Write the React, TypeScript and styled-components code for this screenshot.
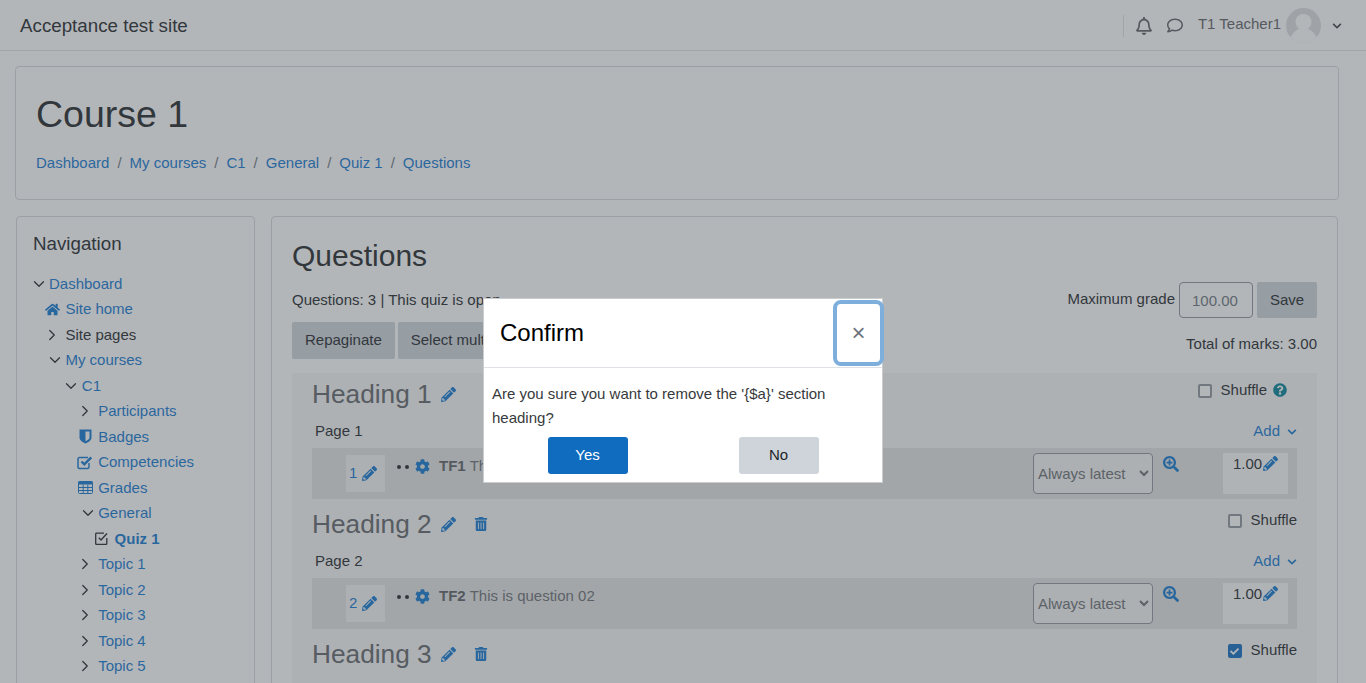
import styled, { createGlobalStyle } from "styled-components";
import {
  FaCheck,
  FaChevronDown,
  FaCog,
  FaHome,
  FaPencilAlt,
  FaQuestionCircle,
  FaRegBell,
  FaRegComment,
  FaSearchPlus,
  FaTrashAlt,
} from "react-icons/fa";
import { ChevronDown, ChevronRight } from "lucide-react";
import type { ReactNode } from "react";

const GlobalStyle = createGlobalStyle`
  html, body {
    margin: 0;
    height: 683px;
    overflow: hidden;
    background: #fff;
  }
  body {
    font-family: "Liberation Sans", Arial, sans-serif;
    font-size: 15px;
    line-height: 22.5px;
    color: #212529;
  }
  * { box-sizing: border-box; }
`;

const Page = styled.div`
  height: 683px;
  overflow: hidden;
`;

const Navbar = styled.header`
  height: 51px;
  display: flex;
  align-items: center;
  padding: 0 20px;
  background: #fff;
  border-bottom: 1px solid #dee2e6;
`;

const SiteName = styled.div`
  font-size: 18.75px;
  flex: 1;
  padding-top: 2px;
`;

const UserMenu = styled.div`
  display: flex;
  align-items: center;
  margin-top: 1px;
  color: #5d6166;
`;

const Divider = styled.div`
  width: 1px;
  height: 22px;
  background: #dee2e6;
  margin-right: 12px;
`;

const NavIcon = styled.span<{ $size: number }>`
  display: inline-flex;
  width: 16px;
  justify-content: center;
  font-size: ${(p) => p.$size}px;
  margin-right: 15px;
`;

const UserName = styled.span`
  margin-right: 5px;
  position: relative;
  top: -1px;
`;

const Caret = styled.span`
  display: inline-flex;
  margin-left: 11px;
  margin-right: 4px;
  font-size: 10px;
  color: #3a3f44;
`;

const PageHeader = styled.section`
  margin: 15px 27px 16px 15px;
  height: 134px;
  padding: 20px;
  background: #fff;
  border: 1px solid #d5d9dd;
  border-radius: 4px;
`;

const Title = styled.h1`
  margin: 0;
  font-size: 37.5px;
  line-height: 54px;
  font-weight: 400;
`;

const Crumbs = styled.nav`
  display: flex;
  gap: 8px;
  margin-top: 11px;
  color: #6c757d;
`;

const CrumbSep = styled.span`
  margin-right: 8px;
`;

const Link = styled.a`
  color: #1177d1;
`;

const Columns = styled.div`
  display: flex;
  gap: 16px;
  padding: 0 28px 0 16px;
`;

const NavBlock = styled.aside`
  width: 239px;
  flex: none;
  height: 520px;
  padding: 16px;
  border: 1px solid #d5d9dd;
  border-radius: 4px;
  background: #fff;
`;

const BlockTitle = styled.h5`
  margin: 0 0 16px;
  font-size: 18.75px;
  line-height: 22px;
  font-weight: 400;
`;

const TreeRow = styled.div<{ $level: number; $plain?: boolean }>`
  height: 25.5px;
  display: flex;
  align-items: center;
  padding-left: ${(p) => p.$level * 16.4}px;
  color: ${(p) => (p.$plain ? "#212529" : "#1177d1")};
`;

const TreeIcon = styled.span<{ $muted?: boolean }>`
  width: 16px;
  margin: 0 5px 0 -5px;
  flex: none;
  display: inline-flex;
  justify-content: center;
  font-size: 15px;
  color: ${(p) => (p.$muted ? "#212529" : "#1177d1")};
  svg { flex: none; }
`;

const TreeDown = styled(ChevronDown)`
  margin-left: 5px;
`;

const TreeLabel = styled.span<{ $bold?: boolean }>`
  font-weight: ${(p) => (p.$bold ? 700 : 400)};
`;

const Main = styled.main`
  flex: 1;
  height: 520px;
  padding: 21px 20px 20px;
  background: #fff;
  border: 1px solid #d5d9dd;
  border-radius: 4px;
`;

const MainTitle = styled.h2`
  margin: 0 0 8px;
  font-size: 30px;
  line-height: 36px;
  font-weight: 400;
`;

const ToolRow = styled.div`
  display: flex;
  justify-content: space-between;
  align-items: flex-end;
  margin-top: 4px;
`;

const QuizInfo = styled.div`
  height: 36px;
  padding-top: 7px;
`;

const GradeForm = styled.div`
  display: flex;
  align-items: flex-start;
  gap: 4px;
`;

const GradeLabel = styled.span`
  padding-top: 6px;
`;

const GradeInput = styled.input`
  width: 74px;
  height: 36px;
  padding: 0 12px;
  font: inherit;
  color: #6c757d;
  background: #fff;
  border: 1px solid #8f959e;
  border-radius: 4px;
`;

const PlainButton = styled.button`
  height: 37px;
  padding: 0 13px;
  font: inherit;
  color: #212529;
  background: #ced4da;
  border: 0;
  border-radius: 2px;
  white-space: nowrap;
`;

const SaveButton = styled(PlainButton)`
  height: 36px;
  width: 60px;
  padding: 0;
`;

const ButtonGroup = styled.div`
  display: flex;
  gap: 3px;
`;

const Marks = styled.div`
  padding-bottom: 4px;
`;

const SectionList = styled.div`
  margin-top: 14px;
  padding: 1px 20px 0;
  background: #f7f7f7;
`;

const Section = styled.section`
  height: 130px;
`;

const SectionHead = styled.div`
  height: 40px;
  display: flex;
  align-items: center;
  justify-content: space-between;
`;

const HeadingWrap = styled.div`
  display: flex;
  align-items: center;
  color: #1177d1;
  font-size: 15px;
`;

const Heading = styled.h3`
  margin: 0 9px 0 0;
  font-size: 26.25px;
  line-height: 40px;
  font-weight: 400;
  color: #606468;
`;

const TrashButton = styled.span`
  display: inline-flex;
  margin-left: 18px;
  font-size: 14px;
`;

const PencilIcon = styled.span`
  display: inline-flex;
  font-size: 15px;
  color: #1177d1;
`;

const ShuffleBox = styled.label<{ $inset?: boolean }>`
  display: flex;
  align-items: center;
  gap: 8px;
  height: 22px;
  margin-top: -8px;
  margin-right: ${(p) => (p.$inset ? 10 : 0)}px;
`;

const Check = styled.span<{ $checked?: boolean }>`
  flex: none;
  width: 14px;
  height: 14px;
  margin: 2px 1px 0 0;
  display: inline-flex;
  align-items: center;
  justify-content: center;
  font-size: 9px;
  color: #fff;
  background: ${(p) => (p.$checked ? "#0f6cbf" : "#fff")};
  border: ${(p) => (p.$checked ? "0" : "2px solid #8f959e")};
  border-radius: 2px;
`;

const HelpIcon = styled.span`
  display: inline-flex;
  margin-left: -2px;
  font-size: 14px;
  color: #008196;
`;

const PageRow = styled.div`
  height: 34px;
  padding-left: 3px;
  display: flex;
  justify-content: space-between;
  align-items: center;
`;

const AddLink = styled.a`
  display: flex;
  align-items: center;
  gap: 7px;
  color: #1177d1;
`;

const AddCaret = styled.span`
  display: inline-flex;
  font-size: 10px;
  margin-top: 2px;
`;

const QuestionRow = styled.div`
  height: 51px;
  background: #e4e4e4;
  display: flex;
  align-items: flex-start;
`;

const NumberBox = styled.div`
  width: 39px;
  height: 37px;
  margin: 7px 0 0 34px;
  padding-left: 3px;
  display: flex;
  align-items: center;
  gap: 5px;
  background: #f4f4f4;
  color: #1177d1;
`;

const Dots = styled.span`
  margin: 7px 0 0 12px;
  width: 18px;
  display: flex;
  gap: 4px;
  padding-top: 10px;
`;

const Dot = styled.i`
  width: 4px;
  height: 4px;
  border-radius: 50%;
  background: #212529;
`;

const CogIcon = styled.span`
  display: inline-flex;
  margin-top: 11px;
  font-size: 15px;
  color: #1177d1;
`;

const QuestionText = styled.div`
  flex: 1;
  margin: 7px 0 0 9px;
  color: #6a6e72;
`;

const QuestionName = styled.strong`
  color: #5c6064;
  margin-right: 4px;
`;

const VersionSelect = styled.select`
  width: 120px;
  height: 41px;
  margin-top: 5px;
  padding: 0;
  font: inherit;
  color: #6a6e72;
  background-color: #f4f4f4;
  border: 1px solid #8f959e;
  border-radius: 4px;
`;

const ZoomIcon = styled.span`
  display: inline-flex;
  width: 16px;
  margin: 8px 44px 0 10px;
  font-size: 16px;
  color: #1177d1;
`;

const GradeBox = styled.div`
  width: 65px;
  height: 41px;
  margin: 5px 9px 0 0;
  padding: 0 0 0 10px;
  display: flex;
  align-items: flex-start;
  background: #fafafa;
`;

const GradeIcon = styled.span`
  display: inline-flex;
  margin: 3px 0 0 1px;
  font-size: 15px;
  color: #1177d1;
`;

const Backdrop = styled.div`
  position: fixed;
  inset: 0;
  padding-top: 298px;
  display: flex;
  justify-content: center;
  align-items: flex-start;
  background: rgba(73, 80, 87, 0.42);
`;

const Dialog = styled.div`
  width: 400px;
  height: 185px;
  background: #fff;
  border: 1px solid #c9cdd0;
  color: #373a3c;
`;

const DialogHead = styled.div`
  height: 69px;
  padding-left: 16px;
  display: flex;
  align-items: center;
  justify-content: space-between;
  border-bottom: 1px solid #dee2e6;
`;

const DialogTitle = styled.h5`
  margin: 0;
  font-size: 24px;
  line-height: 32px;
  font-weight: 400;
  color: #000;
`;

const CloseButton = styled.button`
  flex: none;
  width: 51px;
  height: 66px;
  margin-right: -2px;
  padding: 0;
  font: 400 24px/1 "Liberation Sans", Arial, sans-serif;
  color: #6c757d;
  background: #fff;
  border: 4px solid #7eaedb;
  border-radius: 8px;
`;

const DialogBody = styled.div`
  padding: 14px 8px 8px;
`;

const DialogText = styled.p`
  margin: 0 0 7px;
  line-height: 24px;
  font-size: 15px;
`;

const DialogActions = styled.div`
  display: flex;
  justify-content: space-around;
`;

const DialogButton = styled.button<{ $primary?: boolean }>`
  width: 80px;
  height: 37px;
  padding: 0;
  font: inherit;
  color: ${(p) => (p.$primary ? "#fff" : "#212529")};
  background: ${(p) => (p.$primary ? "#0f6cbf" : "#ced4da")};
  border: 0;
  border-radius: 3px;
`;

const CheckSquare = () => (
  <svg width="16" height="15" viewBox="0 0 16 15" fill="none">
    <path d="M12 8v4a1.5 1.5 0 0 1-1.5 1.5h-8A1.5 1.5 0 0 1 1 12V4a1.5 1.5 0 0 1 1.5-1.5H11" stroke="currentColor" strokeWidth="1.5" />
    <path d="M4.5 6.5l2.8 2.8 7-7" stroke="currentColor" strokeWidth="2.4" />
  </svg>
);

const QuizSquare = () => (
  <svg width="13" height="13" viewBox="0 0 13 13" fill="none">
    <path d="M11.8 6v5.6a.8.8 0 0 1-.8.8H1.5a.8.8 0 0 1-.8-.8V2a.8.8 0 0 1 .8-.8H9" stroke="currentColor" strokeWidth="1.3" />
    <path d="M3.8 5.8l2.2 2.2 6-6.5" stroke="currentColor" strokeWidth="1.4" />
  </svg>
);

const ShieldIcon = () => (
  <svg width="13" height="15" viewBox="0 0 13 15">
    <path d="M.5.5h12v8c0 3-3.5 5-6 6-2.500-1-6-3-6-6z" fill="currentColor" />
    <path d="M6.500 2.500h4v6c0 1.800-2.300 3-4 3.800z" fill="#fff" />
  </svg>
);

const TableIcon = () => (
  <svg width="15" height="13" viewBox="0 0 15 13" fill="none">
    <rect x="0.500" y="0.500" width="14" height="12" rx="1" stroke="currentColor" />
    <rect x="0.500" y="0.500" width="14" height="3" fill="currentColor" />
    <path d="M5.200 3.500v9M9.800 3.500v9M.5 6.500h14M.5 9.500h14" stroke="currentColor" />
  </svg>
);

const Avatar = () => (
  <svg width="35" height="35" viewBox="0 0 35 35">
    <defs>
      <clipPath id="avatar-clip">
        <circle cx="17.5" cy="17.5" r="17.5" />
      </clipPath>
    </defs>
    <g clipPath="url(#avatar-clip)">
      <rect width="35" height="35" fill="#dcdfe2" />
      <circle cx="17.5" cy="14" r="8" fill="#fff" />
      <path d="M3 35c1-9 7-13 10-14h9c3 1 9 5 10 14z" fill="#fff" />
    </g>
  </svg>
);

const crumbs = ["Dashboard", "My courses", "C1", "General", "Quiz 1", "Questions"];

type TreeItem = {
  label: string;
  level: number;
  icon: ReactNode;
  muted?: boolean;
  plain?: boolean;
  bold?: boolean;
};

const down = <TreeDown size={18} strokeWidth={1.7} />;
const right = <ChevronRight size={18} strokeWidth={1.7} />;

const tree: TreeItem[] = [
  { label: "Dashboard", level: 0, icon: down, muted: true },
  { label: "Site home", level: 1, icon: <FaHome /> },
  { label: "Site pages", level: 1, icon: right, muted: true, plain: true },
  { label: "My courses", level: 1, icon: down, muted: true },
  { label: "C1", level: 2, icon: down, muted: true },
  { label: "Participants", level: 3, icon: right, muted: true },
  { label: "Badges", level: 3, icon: <ShieldIcon /> },
  { label: "Competencies", level: 3, icon: <CheckSquare /> },
  { label: "Grades", level: 3, icon: <TableIcon /> },
  { label: "General", level: 3, icon: down, muted: true },
  { label: "Quiz 1", level: 4, icon: <QuizSquare />, muted: true, bold: true },
  { label: "Topic 1", level: 3, icon: right, muted: true },
  { label: "Topic 2", level: 3, icon: right, muted: true },
  { label: "Topic 3", level: 3, icon: right, muted: true },
  { label: "Topic 4", level: 3, icon: right, muted: true },
  { label: "Topic 5", level: 3, icon: right, muted: true },
];

const sections = [
  { heading: "Heading 1", page: "Page 1", num: 1, name: "TF1", text: "This is question 01", trash: false, help: true, checked: false },
  { heading: "Heading 2", page: "Page 2", num: 2, name: "TF2", text: "This is question 02", trash: true, help: false, checked: false },
  { heading: "Heading 3", page: "Page 3", num: 3, name: "TF3", text: "This is question 03", trash: true, help: false, checked: true },
];

const App = () => {
  return (
    <>
      <GlobalStyle />
      <Page>
        <Navbar>
          <SiteName>Acceptance test site</SiteName>
          <UserMenu>
            <Divider />
            <NavIcon $size={18}><FaRegBell /></NavIcon>
            <NavIcon $size={17}><FaRegComment /></NavIcon>
            <UserName>T1 Teacher1</UserName>
            <Avatar />
            <Caret><FaChevronDown /></Caret>
          </UserMenu>
        </Navbar>
        <PageHeader>
          <Title>Course 1</Title>
          <Crumbs>
            {crumbs.map((c, i) => (
              <span key={c}>
                {i > 0 && <CrumbSep>/</CrumbSep>}
                <Link>{c}</Link>
              </span>
            ))}
          </Crumbs>
        </PageHeader>
        <Columns>
          <NavBlock>
            <BlockTitle>Navigation</BlockTitle>
            {tree.map((t) => (
              <TreeRow key={t.label} $level={t.level} $plain={t.plain}>
                <TreeIcon $muted={t.muted}>{t.icon}</TreeIcon>
                <TreeLabel $bold={t.bold}>{t.label}</TreeLabel>
              </TreeRow>
            ))}
          </NavBlock>
          <Main>
            <MainTitle>Questions</MainTitle>
            <ToolRow>
              <QuizInfo>Questions: 3 | This quiz is open</QuizInfo>
              <GradeForm>
                <GradeLabel>Maximum grade</GradeLabel>
                <GradeInput readOnly defaultValue="100.00" />
                <SaveButton>Save</SaveButton>
              </GradeForm>
            </ToolRow>
            <ToolRow>
              <ButtonGroup>
                <PlainButton>Repaginate</PlainButton>
                <PlainButton>Select multiple items</PlainButton>
              </ButtonGroup>
              <Marks>Total of marks: 3.00</Marks>
            </ToolRow>
            <SectionList>
              {sections.map((s) => (
                <Section key={s.heading}>
                  <SectionHead>
                    <HeadingWrap>
                      <Heading>{s.heading}</Heading>
                      <FaPencilAlt />
                      {s.trash && <TrashButton><FaTrashAlt /></TrashButton>}
                    </HeadingWrap>
                    <ShuffleBox $inset={s.help}>
                      <Check $checked={s.checked}>{s.checked && <FaCheck />}</Check>
                      Shuffle
                      {s.help && <HelpIcon><FaQuestionCircle /></HelpIcon>}
                    </ShuffleBox>
                  </SectionHead>
                  <PageRow>
                    {s.page}
                    <AddLink>
                      Add
                      <AddCaret><FaChevronDown /></AddCaret>
                    </AddLink>
                  </PageRow>
                  <QuestionRow>
                    <NumberBox>
                      {s.num}
                      <PencilIcon><FaPencilAlt /></PencilIcon>
                    </NumberBox>
                    <Dots><Dot /><Dot /></Dots>
                    <CogIcon><FaCog /></CogIcon>
                    <QuestionText>
                      <QuestionName>{s.name}</QuestionName>
                      {s.text}
                    </QuestionText>
                    <VersionSelect defaultValue="latest">
                      <option value="latest">Always latest</option>
                    </VersionSelect>
                    <ZoomIcon><FaSearchPlus /></ZoomIcon>
                    <GradeBox>
                      1.00
                      <GradeIcon><FaPencilAlt /></GradeIcon>
                    </GradeBox>
                  </QuestionRow>
                </Section>
              ))}
            </SectionList>
          </Main>
        </Columns>
      </Page>
      <Backdrop>
        <Dialog>
          <DialogHead>
            <DialogTitle>Confirm</DialogTitle>
            <CloseButton aria-label="Close">×</CloseButton>
          </DialogHead>
          <DialogBody>
            <DialogText>Are you sure you want to remove the '{"{$a}"}' section heading?</DialogText>
            <DialogActions>
              <DialogButton $primary>Yes</DialogButton>
              <DialogButton>No</DialogButton>
            </DialogActions>
          </DialogBody>
        </Dialog>
      </Backdrop>
    </>
  );
};

export default App;
